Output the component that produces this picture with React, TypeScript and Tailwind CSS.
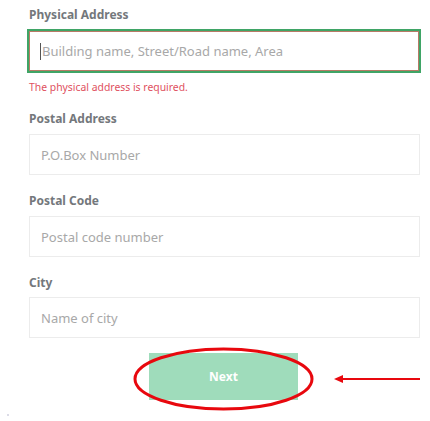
import React from "react";

const font = { fontFamily: '"Noto Sans", "Liberation Sans", sans-serif' };

function Label({ children, className = "" }: { children: React.ReactNode; className?: string }) {
  return (
    <div className={"text-[12px] font-bold leading-[14px] text-[#74787c] " + className}>{children}</div>
  );
}

function Field({ placeholder, className = "" }: { placeholder: string; className?: string }) {
  return (
    <div className={"h-[41px] w-[391px] border border-[#ececec] bg-white flex items-center pl-[11px] " + className}>
      <span className="text-[13px] leading-[18px] text-[#a8a8a8]">{placeholder}</span>
    </div>
  );
}

export default function App() {
  return (
    <div className="w-[430px] h-[421px] bg-white relative overflow-hidden" style={font}>
      <div className="flex flex-col pl-[29px] pt-[8px]">
        <Label>Physical Address</Label>
        <div className="mt-[7px] ml-[-2px] h-[44px] w-[394px] border-2 border-[#3fa566]">
          <div className="h-full w-full border border-[#b77a66] flex items-center pl-[10px]">
            <span className="w-px h-[17px] bg-[#555] mr-[1px]" />
            <span className="text-[13px] leading-[18px] text-[#a8a8a8]">Building name, Street/Road name, Area</span>
          </div>
        </div>
        <div className="mt-[8px] text-[10.4px] leading-[12px] text-[#e0505e]">
          The physical address is required.
        </div>
        <Label className="mt-[19px]">Postal Address</Label>
        <Field className="mt-[8px]" placeholder="P.O.Box Number" />
        <Label className="mt-[19px]">Postal Code</Label>
        <Field className="mt-[8px]" placeholder="Postal code number" />
        <Label className="mt-[19px]">City</Label>
        <Field className="mt-[7px]" placeholder="Name of city" />
      </div>
      <div className="flex justify-center pl-[17px] mt-[15px]">
        <button className="h-[47px] w-[149px] bg-[#9fdcbb] text-white text-[12px] font-bold">
          Next
        </button>
      </div>
      <svg className="absolute left-0 top-0 pointer-events-none" width="430" height="421">
        <ellipse cx="223.5" cy="379" rx="88.5" ry="30" fill="none" stroke="#e8080e" strokeWidth="3" />
        <line x1="340" y1="379" x2="420" y2="379" stroke="#e8080e" strokeWidth="2" />
        <polygon points="334,379 343,375 343,383" fill="#e8080e" />
        <circle cx="8" cy="415" r="0.8" fill="#b0b0c8" />
      </svg>
    </div>
  );
}
